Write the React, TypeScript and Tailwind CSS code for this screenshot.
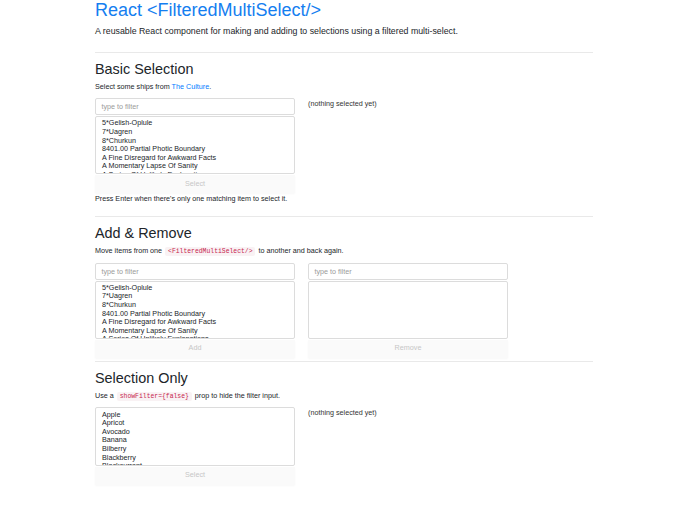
// Demo page for the <FilteredMultiSelect/> component: three example sections
import { useState } from 'react'

const SHIPS = [
  '5*Gelish-Oplule',
  '7*Uagren',
  '8*Churkun',
  '8401.00 Partial Photic Boundary',
  'A Fine Disregard for Awkward Facts',
  'A Momentary Lapse Of Sanity',
  'A Series Of Unlikely Explanations',
  'A Ship With A View',
]

const FRUITS = ['Apple', 'Apricot', 'Avocado', 'Banana', 'Bilberry', 'Blackberry', 'Blackcurrant', 'Blueberry']

function Code({ children }: { children: string }) {
  return (
    <code className="font-['Liberation_Mono',monospace] text-[6.4px] text-[#c7254e] bg-[#f9f2f4] px-[3px] py-[1px] rounded-[2px] mx-[1px]">
      {children}
    </code>
  )
}

function Section({ title, children }: { title: string; children: React.ReactNode }) {
  return (
    <section>
      <hr className="border-0 border-t border-[#e9e9e9] mt-[3px] mb-[8px]" />
      <h2 className="text-[14.4px] leading-[17.3px] font-medium mb-[3.6px]">{title}</h2>
      {children}
    </section>
  )
}

function MultiSelect({
  items, button, showFilter = true,
}: {
  items: string[]; button: string; showFilter?: boolean
}) {
  const [filter, setFilter] = useState('')
  const shown = items.filter(i => i.toLowerCase().includes(filter.toLowerCase()))

  return (
    <div>
      {showFilter && (
        <input
          value={filter}
          onChange={e => setFilter(e.target.value)}
          placeholder="type to filter"
          className="block w-full h-[17px] px-[5.4px] text-[7.2px] border border-[#dcdcdc] rounded-[2px] placeholder-[#9a9a9a] focus:outline-none"
        />
      )}
      <div className={`${showFilter ? 'mt-[1px] pt-[2px] h-[58px]' : 'pt-[3px] h-[59px]'} overflow-hidden border border-[#dcdcdc] rounded-[2px] pl-[6px] text-[7.2px] leading-[8.6px]`}>
        {shown.map(i => <div key={i} className="whitespace-nowrap">{i}</div>)}
      </div>
      <button disabled className="block w-full h-[18px] mt-[1px] bg-[#fafafa] shadow-[0_1px_2px_rgba(0,0,0,0.03)] text-[7.2px] text-[#c6c6c6]">
        {button}
      </button>
    </div>
  )
}

export default function App() {
  return (
    <div className="min-h-[512px] bg-white text-[#212529] font-['Liberation_Sans',Arial,sans-serif]">
      <div className="mx-auto w-[498px]">
        <h1 className="text-[18px] leading-[21.6px] font-medium text-[#147ef0] mb-[3.6px]">React &lt;FilteredMultiSelect/&gt;</h1>
        <p className="text-[8.8px] leading-[13.5px] mb-[13px]">A reusable React component for making and adding to selections using a filtered multi-select.</p>

        <Section title="Basic Selection">
          <p className="text-[7.2px] leading-[10.8px] mb-[6px]">
            Select some ships from <a className="text-[#007bff]">The Culture</a>.
          </p>
          <div className="grid grid-cols-[200px_200px] gap-x-[13px]">
            <MultiSelect items={SHIPS} button="Select" />
            <p className="text-[7.2px] leading-[10.8px] text-[#333] pt-[1px]">(nothing selected yet)</p>
          </div>
          <p className="text-[7.2px] leading-[10.8px] mt-[1px] mb-[11px]">Press Enter when there's only one matching item to select it.</p>
        </Section>

        <Section title="Add & Remove">
          <p className="text-[7.2px] leading-[10.8px] mb-[5px]">
            Move items from one <Code>{'<FilteredMultiSelect/>'}</Code> to another and back again.
          </p>
          <div className="grid grid-cols-[200px_200px] gap-x-[13px]">
            <MultiSelect items={SHIPS} button="Add" />
            <MultiSelect items={[]} button="Remove" />
          </div>
        </Section>

        <Section title="Selection Only">
          <p className="text-[7.2px] leading-[10.8px] mb-[4px]">
            Use a <Code>{'showFilter={false}'}</Code> prop to hide the filter input.
          </p>
          <div className="grid grid-cols-[200px_200px] gap-x-[13px]">
            <MultiSelect items={FRUITS} button="Select" showFilter={false} />
            <p className="text-[7.2px] leading-[10.8px] text-[#333] pt-[1px]">(nothing selected yet)</p>
          </div>
        </Section>
      </div>
    </div>
  )
}
